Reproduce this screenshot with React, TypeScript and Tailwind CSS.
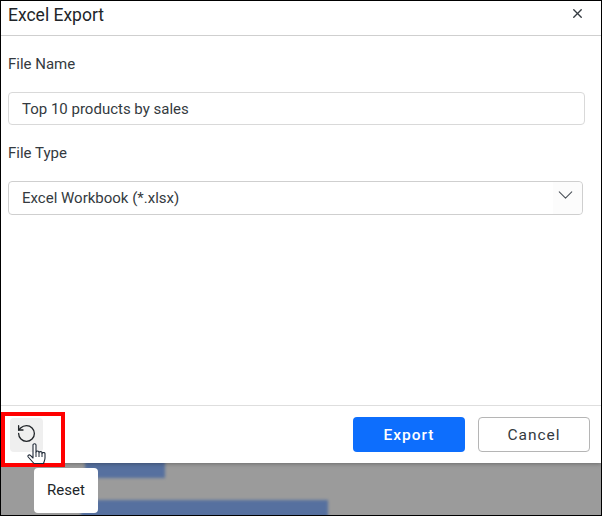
import { ChevronDown, RotateCcw, X } from "lucide-react";

// hand cursor from the screenshot
function HandCursor() {
  return (
    <svg width="19" height="22" viewBox="0 0 19 22" className="absolute left-[26px] top-[442px]">
      <path
        d="M6 2c0-1.6 3-1.6 3 0v7c0-1.3 3-1.3 3 0v.6c0-1.3 3-1.3 3 0v.8c0-1.2 3-1.2 3 0V15c0 2-1 3.5-1.5 5.5H7L1.2 14c-1-1.5.9-2.8 2.2-1.6L6 15z"
        fill="#fff"
        stroke="#1f2937"
        strokeWidth="1.1"
        strokeLinejoin="round"
      />
      <path d="M9 9v5M12 9.6v4.4M15 10.4v3.6" stroke="#1f2937" strokeWidth="1" fill="none" />
    </svg>
  );
}

export default function App() {
  return (
    <div
      className="relative flex h-[516px] w-[602px] flex-col overflow-hidden border border-black bg-[#9b9b9b] text-[#343a40]"
      style={{ fontFamily: "Roboto, 'Liberation Sans', sans-serif" }}
    >
      {/* dialog */}
      <div className="relative z-10 flex h-[462px] shrink-0 flex-col bg-white shadow-[0_1px_4px_rgba(0,0,0,0.3)]">
        <div className="flex h-[35px] shrink-0 items-start justify-between border-b border-[#cfcfcf] pl-[7px] pr-[16px]">
          <span className="text-[17.5px] leading-[28px] text-[#212529]">Excel Export</span>
          <X size={15} strokeWidth={2.2} className="mt-[5px] text-[#343a40]" />
        </div>

        <div className="flex flex-1 flex-col pl-[7px] pr-[16px]">
          <label className="mt-[19px] text-[15px] leading-[18px]">File Name</label>
          <div className="mt-[19px] flex h-[33px] items-center rounded border border-[#d9d9d9] pl-[13px] pt-[2px] text-[15px]">
            Top 10 products by sales
          </div>
          <label className="mt-[19px] text-[15px] leading-[18px]">File Type</label>
          <div className="mt-[19px] mr-[2px] flex h-[34px] items-center justify-between rounded border border-[#cfcfcf] pl-[13px] text-[15px]">
            <span>Excel Workbook (*.xlsx)</span>
            <div className="flex h-full w-[29px] items-center justify-center rounded-r bg-[#fcfcfc] pr-[4px]">
              <ChevronDown size={28} strokeWidth={1} className="mb-[7px] text-[#495057]" />
            </div>
          </div>
        </div>

        <div className="flex h-[58px] shrink-0 items-center justify-between border-t border-[#dedede] pl-[9px] pr-[11px]">
          <div className="flex h-[34px] w-[33px] items-center justify-center rounded bg-[#efefef]">
            <RotateCcw size={21} strokeWidth={1.5} className="mb-[2px] text-[#212529]" />
          </div>
          <div className="flex gap-[13px]">
            <button className="h-[35px] w-[112px] rounded bg-[#0d6efd] pt-[2px] text-[15.5px] font-medium tracking-[1px] text-white">
              Export
            </button>
            <button className="h-[35px] w-[112px] rounded border border-[#b5b5b5] bg-white pt-[2px] text-[15.5px] tracking-[1px] text-[#343a40]">
              Cancel
            </button>
          </div>
        </div>
      </div>

      {/* blurred report behind the dialog */}
      <div className="flex flex-1 flex-col justify-between overflow-hidden">
        <div className="-mt-[4px] ml-[84px] h-[19px] w-[80px] bg-[#56709f] blur-[1.5px]" />
        <div className="-mb-[4px] ml-[80px] h-[19px] w-[247px] bg-[#56709f] blur-[1.5px]" />
      </div>

      {/* annotation + tooltip over the dialog */}
      <div className="absolute z-20 left-0 top-[411px] h-[55px] w-[64px] border-[4px] border-[#ff0000]" />
      <div className="absolute z-20 left-0 top-0">
        <HandCursor />
      </div>
      <div className="absolute z-20 left-[33px] top-[467px] flex h-[45px] w-[64px] items-center justify-center rounded bg-white text-[15px] text-[#212529]">
        Reset
      </div>
    </div>
  );
}
